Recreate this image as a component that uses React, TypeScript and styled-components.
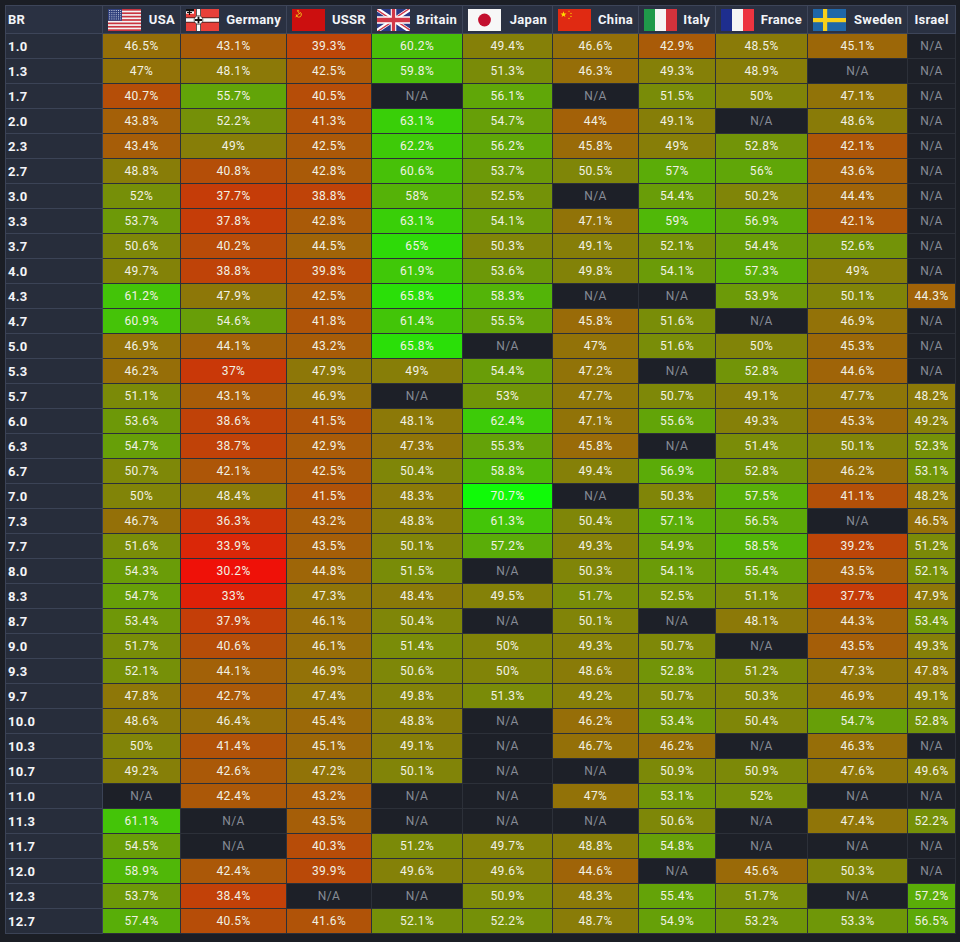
import React from "react";
import styled, { createGlobalStyle } from "styled-components";

const GlobalStyle = createGlobalStyle`
  html, body {
    margin: 0;
    padding: 0;
    background: #1b1e25;
  }
  body {
    font-family: Roboto, "Noto Sans", "Liberation Sans", sans-serif;
  }
`;

const Page = styled.div`
  padding: 5px;
  width: 950px;
`;

const Table = styled.table`
  border-collapse: collapse;
  table-layout: fixed;
  width: 950px;
`;

const HeadCell = styled.th<{ $center?: boolean; $label?: boolean }>`
  height: 27px;
  padding: ${(p) => (p.$label ? "0 2px" : "0 5px")};
  background: #2a3142;
  border: 1px solid #3d4559;
  color: #f2f4f8;
  font-size: 13px;
  font-weight: 700;
  letter-spacing: 0.3px;
  text-align: ${(p) => (p.$center ? "center" : "left")};
  white-space: nowrap;
`;

const HeadInner = styled.div`
  display: flex;
  align-items: center;
  justify-content: space-between;
  gap: 6px;
`;

const Flag = styled.svg`
  width: 33px;
  height: 22px;
  display: block;
  flex: none;
`;

const Row = styled.tr`
  height: 25px;
`;

const BrCell = styled.td`
  padding: 0 2px;
  background: #272d3b;
  border: 1px solid #3b4356;
  color: #f4f5f8;
  font-size: 13px;
  font-weight: 700;
  letter-spacing: 0.3px;
`;

const ValueCell = styled.td.attrs<{ $value: number | null }>((p) => ({
  style: p.$value === null ? undefined : { background: heat(p.$value) },
}))<{ $value: number | null }>`
  padding: 0;
  border: 1px solid #2c3039;
  background: #1d2028;
  color: ${(p) => (p.$value === null ? "#878c96" : "#f1f1e4")};
  font-size: 12px;
  letter-spacing: 0.4px;
  text-align: center;
`;

function heat(v: number) {
  const t = Math.max(0, Math.min(1, (v - 30) / 40.5));
  const r = Math.round(240 * (1 - t) + 16 * t);
  const g = Math.round(16 * (1 - t) + 250 * t);
  const b = 8;
  return `rgb(${r},${g},${b})`;
}

const UsaFlag = () => (
  <Flag viewBox="0 0 33 22" preserveAspectRatio="none">
    <rect width="33" height="22" fill="#f4f4f4" />
    {Array.from({ length: 7 }).map((_, i) => (
      <rect key={i} y={i * (22 / 6.5)} width="33" height={22 / 13} fill="#c9343f" />
    ))}
    <rect width="14" height="11.8" fill="#2f3f7c" />
    {Array.from({ length: 5 }).map((_, r) =>
      Array.from({ length: 6 }).map((_, c) => (
        <rect key={`${r}-${c}`} x={1.2 + c * 2.2} y={1.1 + r * 2.1} width="0.9" height="0.9" fill="#e8ecf5" />
      ))
    )}
  </Flag>
);

const GermanyFlag = () => (
  <Flag viewBox="0 0 33 22" preserveAspectRatio="none">
    <rect width="33" height="22" fill="#e8403a" />
    <rect x="0" y="8.5" width="33" height="5" fill="#111" />
    <rect x="10" y="0" width="5" height="22" fill="#111" />
    <rect x="0" y="9.2" width="33" height="3.6" fill="#fafafa" />
    <rect x="10.7" y="0" width="3.6" height="22" fill="#fafafa" />
    <circle cx="12.5" cy="11" r="4.4" fill="#fafafa" stroke="#111" strokeWidth="0.6" />
    <path d="M12.5 7.4 v7.2 M8.9 11 h7.2" stroke="#111" strokeWidth="1.8" />
    <rect x="0" y="0" width="8" height="7" fill="#fafafa" />
    <rect x="0" y="0" width="8" height="2.3" fill="#111" />
    <rect x="0" y="4.7" width="8" height="2.3" fill="#e8403a" />
    <path d="M3.5 1 v5 M1 3.5 h5" stroke="#111" strokeWidth="1.2" />
  </Flag>
);

const UssrFlag = () => (
  <Flag viewBox="0 0 33 22" preserveAspectRatio="none">
    <rect width="33" height="22" fill="#cc0f0f" />
    <path d="M4.2 5.5 a2.6 2.6 0 1 0 3.4 -2.4" stroke="#f2c619" strokeWidth="0.9" fill="none" />
    <path d="M3.6 8.2 L7.4 4.2 M6.3 3.3 L8.1 5.1" stroke="#f2c619" strokeWidth="0.9" />
    <polygon points="6,0.6 6.4,1.6 7.4,1.6 6.6,2.2 6.9,3.1 6,2.5 5.1,3.1 5.4,2.2 4.6,1.6 5.6,1.6" fill="#f2c619" />
  </Flag>
);

const BritainFlag = () => (
  <Flag viewBox="0 0 60 30" preserveAspectRatio="none">
    <clipPath id="uk-s">
      <path d="M0,0 v30 h60 v-30 z" />
    </clipPath>
    <clipPath id="uk-t">
      <path d="M30,15 h30 v15 z v15 h-30 z h-30 v-15 z v-15 h30 z" />
    </clipPath>
    <g clipPath="url(#uk-s)">
      <path d="M0,0 v30 h60 v-30 z" fill="#2b3a86" />
      <path d="M0,0 L60,30 M60,0 L0,30" stroke="#fff" strokeWidth="6" />
      <path d="M0,0 L60,30 M60,0 L0,30" clipPath="url(#uk-t)" stroke="#d23848" strokeWidth="4" />
      <path d="M30,0 v30 M0,15 h60" stroke="#fff" strokeWidth="10" />
      <path d="M30,0 v30 M0,15 h60" stroke="#d23848" strokeWidth="6" />
    </g>
  </Flag>
);

const JapanFlag = () => (
  <Flag viewBox="0 0 33 22" preserveAspectRatio="none">
    <rect width="33" height="22" fill="#f7f7f7" />
    <circle cx="16.5" cy="11" r="6.4" fill="#c3102f" />
  </Flag>
);

const star = (cx: number, cy: number, r: number) => {
  const pts: string[] = [];
  for (let i = 0; i < 10; i++) {
    const rad = i % 2 === 0 ? r : r * 0.4;
    const a = -Math.PI / 2 + (i * Math.PI) / 5;
    pts.push(`${(cx + rad * Math.cos(a)).toFixed(2)},${(cy + rad * Math.sin(a)).toFixed(2)}`);
  }
  return pts.join(" ");
};

const ChinaFlag = () => (
  <Flag viewBox="0 0 33 22" preserveAspectRatio="none">
    <rect width="33" height="22" fill="#e02a12" />
    <polygon points={star(5.5, 5.5, 3.2)} fill="#ffde00" />
    <polygon points={star(11, 2.2, 1)} fill="#ffde00" />
    <polygon points={star(13, 4.4, 1)} fill="#ffde00" />
    <polygon points={star(13, 7.4, 1)} fill="#ffde00" />
    <polygon points={star(11, 9.4, 1)} fill="#ffde00" />
  </Flag>
);

const ItalyFlag = () => (
  <Flag viewBox="0 0 33 22" preserveAspectRatio="none">
    <rect width="11" height="22" fill="#1f9a4a" />
    <rect x="11" width="11" height="22" fill="#f5f5f5" />
    <rect x="22" width="11" height="22" fill="#d2323c" />
  </Flag>
);

const FranceFlag = () => (
  <Flag viewBox="0 0 33 22" preserveAspectRatio="none">
    <rect width="11" height="22" fill="#1e2e8e" />
    <rect x="11" width="11" height="22" fill="#f5f5f5" />
    <rect x="22" width="11" height="22" fill="#ec3440" />
  </Flag>
);

const SwedenFlag = () => (
  <Flag viewBox="0 0 33 22" preserveAspectRatio="none">
    <rect width="33" height="22" fill="#1f67a8" />
    <rect x="10" width="4.2" height="22" fill="#f7cf1a" />
    <rect y="9" width="33" height="4.2" fill="#f7cf1a" />
  </Flag>
);

type Nation = { name: string; width: number; flag?: React.ReactNode };

const nations: Nation[] = [
  { name: "USA", width: 78, flag: <UsaFlag /> },
  { name: "Germany", width: 106, flag: <GermanyFlag /> },
  { name: "USSR", width: 85, flag: <UssrFlag /> },
  { name: "Britain", width: 91, flag: <BritainFlag /> },
  { name: "Japan", width: 90, flag: <JapanFlag /> },
  { name: "China", width: 86, flag: <ChinaFlag /> },
  { name: "Italy", width: 77, flag: <ItalyFlag /> },
  { name: "France", width: 92, flag: <FranceFlag /> },
  { name: "Sweden", width: 100, flag: <SwedenFlag /> },
  { name: "Israel", width: 48 },
];

const raw = `
1.0|46.5,43.1,39.3,60.2,49.4,46.6,42.9,48.5,45.1,-
1.3|47,48.1,42.5,59.8,51.3,46.3,49.3,48.9,-,-
1.7|40.7,55.7,40.5,-,56.1,-,51.5,50,47.1,-
2.0|43.8,52.2,41.3,63.1,54.7,44,49.1,-,48.6,-
2.3|43.4,49,42.5,62.2,56.2,45.8,49,52.8,42.1,-
2.7|48.8,40.8,42.8,60.6,53.7,50.5,57,56,43.6,-
3.0|52,37.7,38.8,58,52.5,-,54.4,50.2,44.4,-
3.3|53.7,37.8,42.8,63.1,54.1,47.1,59,56.9,42.1,-
3.7|50.6,40.2,44.5,65,50.3,49.1,52.1,54.4,52.6,-
4.0|49.7,38.8,39.8,61.9,53.6,49.8,54.1,57.3,49,-
4.3|61.2,47.9,42.5,65.8,58.3,-,-,53.9,50.1,44.3
4.7|60.9,54.6,41.8,61.4,55.5,45.8,51.6,-,46.9,-
5.0|46.9,44.1,43.2,65.8,-,47,51.6,50,45.3,-
5.3|46.2,37,47.9,49,54.4,47.2,-,52.8,44.6,-
5.7|51.1,43.1,46.9,-,53,47.7,50.7,49.1,47.7,48.2
6.0|53.6,38.6,41.5,48.1,62.4,47.1,55.6,49.3,45.3,49.2
6.3|54.7,38.7,42.9,47.3,55.3,45.8,-,51.4,50.1,52.3
6.7|50.7,42.1,42.5,50.4,58.8,49.4,56.9,52.8,46.2,53.1
7.0|50,48.4,41.5,48.3,70.7,-,50.3,57.5,41.1,48.2
7.3|46.7,36.3,43.2,48.8,61.3,50.4,57.1,56.5,-,46.5
7.7|51.6,33.9,43.5,50.1,57.2,49.3,54.9,58.5,39.2,51.2
8.0|54.3,30.2,44.8,51.5,-,50.3,54.1,55.4,43.5,52.1
8.3|54.7,33,47.3,48.4,49.5,51.7,52.5,51.1,37.7,47.9
8.7|53.4,37.9,46.1,50.4,-,50.1,-,48.1,44.3,53.4
9.0|51.7,40.6,46.1,51.4,50,49.3,50.7,-,43.5,49.3
9.3|52.1,44.1,46.9,50.6,50,48.6,52.8,51.2,47.3,47.8
9.7|47.8,42.7,47.4,49.8,51.3,49.2,50.7,50.3,46.9,49.1
10.0|48.6,46.4,45.4,48.8,-,46.2,53.4,50.4,54.7,52.8
10.3|50,41.4,45.1,49.1,-,46.7,46.2,-,46.3,-
10.7|49.2,42.6,47.2,50.1,-,-,50.9,50.9,47.6,49.6
11.0|-,42.4,43.2,-,-,47,53.1,52,-,-
11.3|61.1,-,43.5,-,-,-,50.6,-,47.4,52.2
11.7|54.5,-,40.3,51.2,49.7,48.8,54.8,-,-,-
12.0|58.9,42.4,39.9,49.6,49.6,44.6,-,45.6,50.3,-
12.3|53.7,38.4,-,-,50.9,48.3,55.4,51.7,-,57.2
12.7|57.4,40.5,41.6,52.1,52.2,48.7,54.9,53.2,53.3,56.5
`;

const rows = raw
  .trim()
  .split("\n")
  .map((line) => {
    const [br, vals] = line.split("|");
    return {
      br,
      values: vals.split(",").map((v) => (v === "-" ? null : parseFloat(v))),
    };
  });

export default function App() {
  return (
    <Page>
      <GlobalStyle />
      <Table>
        <colgroup>
          <col style={{ width: 97 }} />
          {nations.map((n) => (
            <col key={n.name} style={{ width: n.width }} />
          ))}
        </colgroup>
        <thead>
          <tr>
            <HeadCell $label>BR</HeadCell>
            {nations.map((n) =>
              n.flag ? (
                <HeadCell key={n.name}>
                  <HeadInner>
                    {n.flag}
                    <span>{n.name}</span>
                  </HeadInner>
                </HeadCell>
              ) : (
                <HeadCell key={n.name} $center>
                  {n.name}
                </HeadCell>
              )
            )}
          </tr>
        </thead>
        <tbody>
          {rows.map((r) => (
            <Row key={r.br}>
              <BrCell>{r.br}</BrCell>
              {r.values.map((v, i) => (
                <ValueCell key={i} $value={v}>
                  {v === null ? "N/A" : `${v}%`}
                </ValueCell>
              ))}
            </Row>
          ))}
        </tbody>
      </Table>
    </Page>
  );
}
